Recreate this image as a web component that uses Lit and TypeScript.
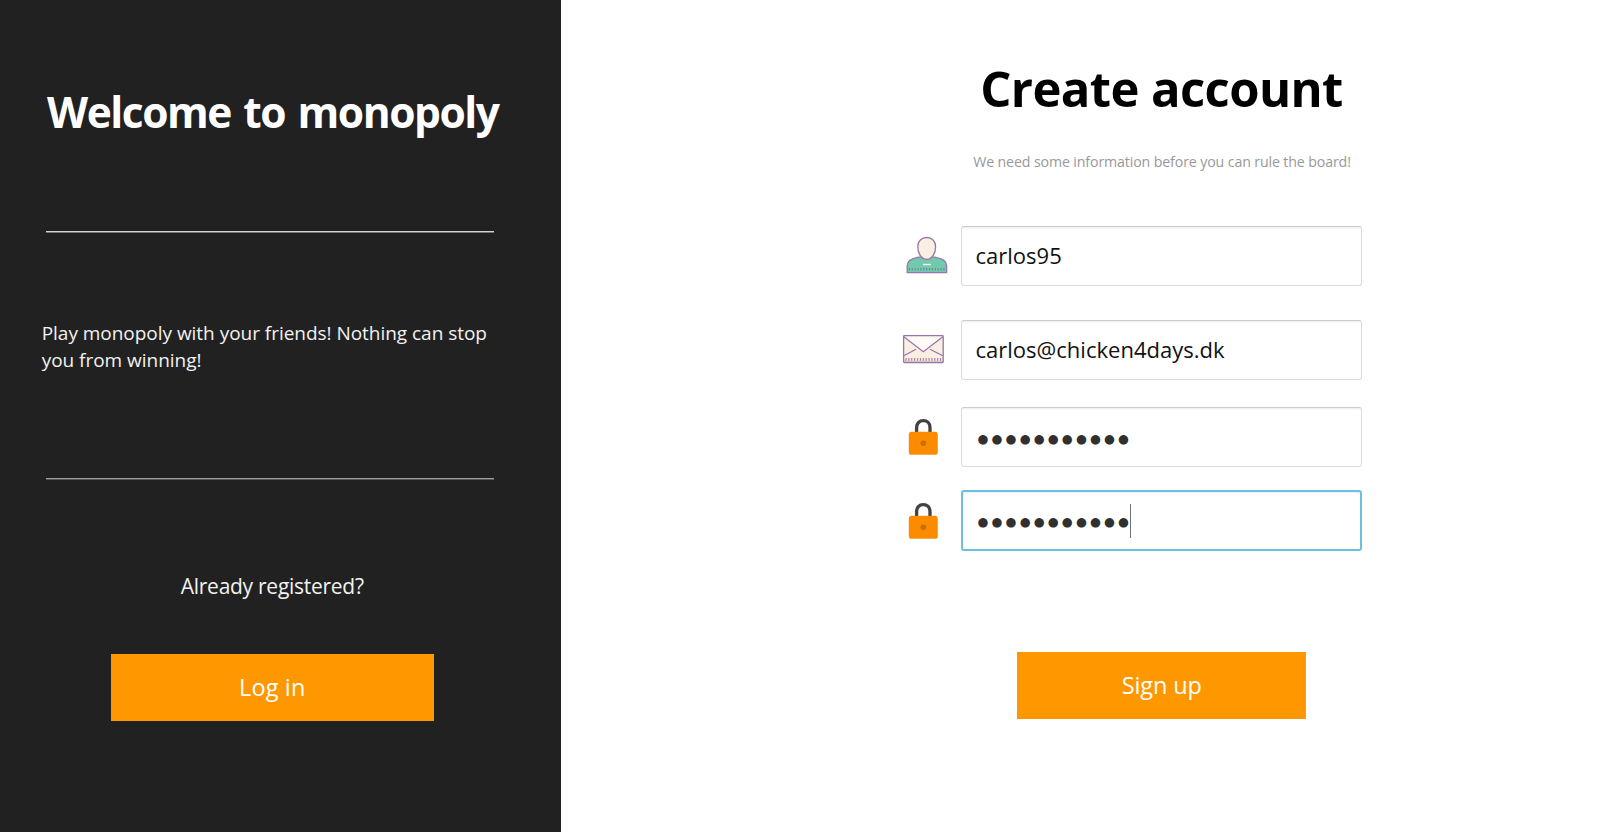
import { LitElement, html, css, svg } from "lit";
import { customElement, property } from "lit/decorators.js";
import { classMap } from "lit/directives/class-map.js";

const range = (n: number) => Array.from({ length: n }, (_, i) => i);

const icons: Record<string, unknown> = {
  user: svg`
    <path d="M17.5 31.2C11 32.4 6.2 34.4 6.2 39.5V46.7H45.6V39.5C45.6 34.4 40.6 32.4 33.9 31.2Z"
      fill="#72c9ae" stroke="#9676ac" stroke-width="1.3" stroke-linejoin="round"/>
    <path d="M25.7 11.5C30.9 11.5 34.6 15.2 34.6 20.8C34.6 27 31.2 33.3 25.7 33.3C20.2 33.3 16.8 27 16.8 20.8C16.8 15.2 20.5 11.5 25.7 11.5Z"
      fill="#faefe0" stroke="#9676ac" stroke-width="1.3"/>
    <path d="M22 38.5h7.8" stroke="#faefde" stroke-width="1.4"/>
    ${range(13).map((i) => svg`<path d="M${8.4 + i * 2.88} 42v2.5" stroke="#6f8c9c" stroke-width="1.2"/>`)}`,
  mail: svg`
    <rect x="2.6" y="15.7" width="39.6" height="26.8" rx="0.8" fill="#faefe0"/>
    <path d="M2.8 16.2L22.3 31.8L41.9 16.2Z" fill="#fefaf5"/>
    <path d="M2.8 40.2h39.2v2.2H2.8z" fill="#f1dccb"/>
    <path d="M2.8 16.7L22.3 31.8L41.9 16.7M2.8 35.8L15 29.2M29 29.2L41.9 35.8"
      fill="none" stroke="#9676ac" stroke-width="1.2"/>
    <rect x="2.6" y="15.7" width="39.6" height="26.8" rx="0.8" fill="none" stroke="#9676ac" stroke-width="1.3"/>
    ${range(13).map((i) => svg`<path d="M${5 + i * 2.88} 38.1v2.6" stroke="#9878a8" stroke-width="1.1"/>`)}`,
  lock: svg`
    <path d="M15.6 27V20.6C15.6 16.2 18.4 13.7 22.3 13.7C26.2 13.7 29 16.2 29 20.6V27"
      fill="none" stroke="#424242" stroke-width="3.3"/>
    <rect x="7.8" y="24.8" width="29" height="23" rx="2.9" fill="#fb8c00"/>
    <circle cx="22.3" cy="36.2" r="2.8" fill="#c76f00"/>`,
};

@customElement("form-field")
class FormField extends LitElement {
  @property() icon = "user";
  @property() value = "";
  @property({ type: Boolean }) secret = false;
  @property({ type: Boolean }) active = false;

  static styles = css`
    :host { display: flex; }
    .icon { width: 60px; height: 60px; flex: none; }
    .icon.active { margin-top: 1px; }
    .box {
      flex: 1; height: 60px; box-sizing: border-box;
      display: flex; align-items: center;
      padding: 0 0 3px 13.5px;
      border: 1px solid #dcdcdc; border-top-color: #cccccc;
      border-radius: 3px; background: #fff;
      box-shadow: inset 0 2px 2px -1px #ececec;
      font-size: 22px; letter-spacing: 0.01px; color: #111;
      white-space: nowrap;
    }
    .box.active {
      height: 61px;
      border: 2px solid #6bbfe0;
      padding-left: 12.5px;
      box-shadow: inset 0 2px 2px -1px #e6edf0;
    }
    .dots {
      font-family: "DejaVu Sans", sans-serif;
      font-size: 12.5px; letter-spacing: 3.15px; line-height: 20px;
      color: #303030; padding: 7px 0 0 2px;
    }
    .active .dots { padding-top: 5px; }
    .caret { width: 1px; height: 34px; background: #707070; margin: 3px 0 0 -2px; }
  `;

  render() {
    return html`
      <svg class=${classMap({ icon: true, active: this.active })} viewBox="0 0 60 60">${icons[this.icon]}</svg>
      <div class=${classMap({ box: true, active: this.active })}>
        ${this.secret
          ? html`<span class="dots">${"●".repeat(this.value.length)}</span>`
          : html`<span>${this.value}</span>`}
        ${this.active ? html`<span class="caret"></span>` : null}
      </div>`;
  }
}

@customElement("app-root")
class AppRoot extends LitElement {
  static styles = css`
    :host {
      display: flex; width: 1600px; height: 832px; overflow: hidden;
      background: #fff; font-family: "Open Sans", "Noto Sans", sans-serif;
    }
    h1, h2, p { margin: 0; white-space: nowrap; }
    .side {
      width: 561.4px; height: 832px; flex: none; box-sizing: border-box;
      background: #212121; color: #fff; padding-top: 82px;
      display: flex; flex-direction: column;
    }
    .welcome {
      font-size: 42.5px; line-height: 60px; letter-spacing: -1.46px; word-spacing: 2.8px;
      margin-left: 47px;
    }
    .rule {
      width: 447.5px; height: 2px; margin: 89px 0 0 46.4px;
      background: linear-gradient(#d2d2d2 50%, #757575 50%);
    }
    .rule.low { margin-top: 105px; background: linear-gradient(#9c9c9c 50%, #585858 50%); }
    .pitch { font-size: 19px; line-height: 26.5px; letter-spacing: -0.03px; margin: 87px 0 0 41.7px; color: #f2f2f2; }
    .side-foot { width: 323.5px; margin: 90.5px 0 0 110.5px; text-align: center; }
    .asked { font-size: 21px; line-height: 30px; letter-spacing: -0.27px; color: #f2f2f2; }
    .btn {
      display: block; width: 100%; height: 67px; box-sizing: border-box;
      border: 0; padding: 0; background: #ff9800; color: #fff;
      font: 23.5px/1 "Open Sans", "Noto Sans", sans-serif;
    }
    .login { margin-top: 53.5px; letter-spacing: 0.15px; }
    .main { width: 461px; margin-left: 339.6px; padding-top: 54px; }
    .head { margin-left: 60px; text-align: center; }
    .create { font-size: 49px; line-height: 68px; letter-spacing: -0.6px; color: #000; }
    .hint {
      font-size: 14.2px; line-height: 20px; letter-spacing: -0.13px; color: #999;
      margin-top: 29.5px; padding-left: 1px;
    }
    .first { margin-top: 54.5px; }
    .second { margin-top: 34px; }
    .third { margin-top: 27px; }
    .fourth { margin-top: 23px; }
    .signup { width: 289px; margin: 101px 0 0 116.3px; letter-spacing: -0.13px; }
  `;

  render() {
    return html`
      <aside class="side">
        <h1 class="welcome">Welcome to monopoly</h1>
        <div class="rule"></div>
        <p class="pitch">Play monopoly with your friends! Nothing can stop<br />you from winning!</p>
        <div class="rule low"></div>
        <div class="side-foot">
          <p class="asked">Already registered?</p>
          <button class="btn login">Log in</button>
        </div>
      </aside>
      <main class="main">
        <header class="head">
          <h2 class="create">Create account</h2>
          <p class="hint">We need some information before you can rule the board!</p>
        </header>
        <form-field class="first" icon="user" value="carlos95"></form-field>
        <form-field class="second" icon="mail" value="carlos@chicken4days.dk"></form-field>
        <form-field class="third" icon="lock" value="chicken4day" secret></form-field>
        <form-field class="fourth" icon="lock" value="chicken4day" secret active></form-field>
        <button class="btn signup">Sign up</button>
      </main>`;
  }
}
